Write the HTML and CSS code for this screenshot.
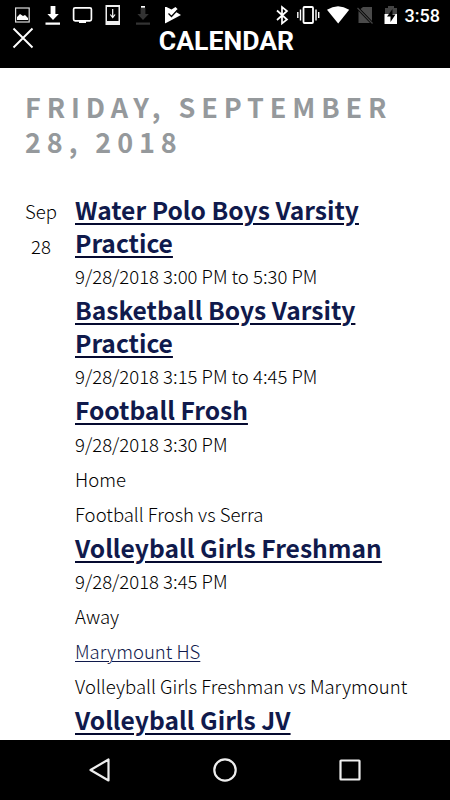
FILE: index.html
```html
<!doctype html>
<html lang="en">
<head>
    <meta charset="UTF-8">
    <title>Calendar</title>
    <link rel="stylesheet" href="styles.css">
</head>
<body>
<div class="header">
    <div class="status-bar">
        <svg class="status-icons" width="450" height="30" viewBox="0 0 450 30">
            <!-- picture -->
            <rect x="15.6" y="8" width="13.6" height="14" fill="none" stroke="#ddd" stroke-width="1.2"/>
            <path d="M17 20v-3l3-3 3 2 2-1 3 3v2z" fill="#fff"/>
            <!-- download -->
            <path d="M50.6 6h4.8v8h3.4L53 20l-5.6-6h3.2zM45.5 22.5h14.5v2.2H45.5z" fill="#fff"/>
            <!-- screen -->
            <rect x="73.6" y="7.8" width="17.8" height="13" rx="1.5" fill="none" stroke="#fff" stroke-width="1.7"/>
            <path d="M79 21h7v2h-7z" fill="#fff"/>
            <!-- phone download -->
            <path d="M105.5 5H120v20h-14.5zM107 7v14h11.5V7z" fill="#eee" fill-rule="evenodd"/>
            <path d="M112.7 9v8M110.3 14.5l2.4 3 2.4-3" fill="none" stroke="#fff" stroke-width="1.2"/>
            <!-- download, inactive -->
            <path d="M140.6 8h4.8v6h3.4L143 20l-5.6-6h3.2zM136 22.5h14v2.2h-14z" fill="#333"/>
            <path d="M141 6h4v1.7h-4z" fill="#fff"/>
            <!-- play check -->
            <path d="M166.5 7l5 2.5 4-2.5 2 2-1.5 3 5 3-15.500 8.300H165V7z" fill="#fff"/>
            <path d="M168.5 13.5l3 3 6-6.5" fill="none" stroke="#000" stroke-width="1.3"/>
            <!-- bluetooth -->
            <path d="M277 10.5l10 9-5 4V7l5 4-10 9" fill="none" stroke="#fff" stroke-width="1.7"/>
            <!-- vibrate -->
            <rect x="303.5" y="7" width="9.5" height="16" rx="1" fill="none" stroke="#fff" stroke-width="1.8"/>
            <path d="M300.5 9.5v11M297.8 12v6M316 9.5v11M318.7 12v6" stroke="#fff" stroke-width="1.4"/>
            <!-- wifi -->
            <path d="M327 9.8Q338 2.5 349.2 9.8L338.2 23.5z" fill="#fff"/>
            <!-- no sim -->
            <path d="M363 7h9v14l-11.5-12zM358.5 11l11.500 12h-11.500z" fill="#4a4a4a"/>
            <path d="M357.5 8l15 15.5" stroke="#444" stroke-width="1.2"/>
            <!-- battery -->
            <path d="M388 6h6v2h3v7h-12V8h3z" fill="#444"/>
            <path d="M384.5 14h12.5v10h-12.5z" fill="#fff"/>
            <path d="M392.5 9l-5.5 7.5h3.5V22l5-7.5h-3z" fill="#000"/>
        </svg>
        <span class="time">3:58</span>
    </div>
    <div class="title-bar">
        <svg class="close" width="22" height="22" viewBox="0 0 22 22">
            <path d="M1.5 1.5l19 19M20.5 1.5l-19 19" stroke="#fff" stroke-width="1.9"/>
        </svg>
        <h1>CALENDAR</h1>
    </div>
</div>

<div class="content">
    <h2>Friday, September 28, 2018</h2>
    <div class="day">
        <div class="date">
            <p>Sep</p>
            <p>28</p>
        </div>
        <ul class="events">
            <li>
                <h3><a href="#">Water Polo Boys Varsity Practice</a></h3>
                <p>9/28/2018 3:00 PM to 5:30 PM</p>
            </li>
            <li>
                <h3><a href="#">Basketball Boys Varsity Practice</a></h3>
                <p>9/28/2018 3:15 PM to 4:45 PM</p>
            </li>
            <li>
                <h3><a href="#">Football Frosh</a></h3>
                <p>9/28/2018 3:30 PM</p>
                <p>Home</p>
                <p>Football Frosh vs Serra</p>
            </li>
            <li>
                <h3><a href="#">Volleyball Girls Freshman</a></h3>
                <p>9/28/2018 3:45 PM</p>
                <p>Away</p>
                <p><a href="#">Marymount HS</a></p>
                <p>Volleyball Girls Freshman vs Marymount</p>
            </li>
            <li>
                <h3><a href="#">Volleyball Girls JV</a></h3>
            </li>
        </ul>
    </div>
</div>

<div class="nav-bar">
    <svg width="24" height="24" viewBox="0 0 24 24">
        <path d="M20.5 1.5v21L2.5 12z"/>
    </svg>
    <svg width="24" height="24" viewBox="0 0 24 24">
        <circle cx="12" cy="12" r="10.7"/>
    </svg>
    <svg width="24" height="24" viewBox="0 0 24 24">
        <rect x="2.5" y="2.5" width="19" height="19" rx="0.5"/>
    </svg>
</div>
</body>
</html>
```

FILE: styles.css
```css
* {
    margin: 0;
    padding: 0;
    box-sizing: border-box;
}

body {
    display: flex;
    flex-direction: column;
    height: 800px;
    overflow: hidden;
    background: #fff;
    color: #000;
    font-family: "Noto Sans CJK SC", "Noto Sans", sans-serif;
}

li {
    list-style: none;
}

.header {
    flex: none;
    height: 68px;
    background: #000;
    color: #fff;
    font-family: Roboto, sans-serif;
}

.status-bar {
    display: grid;
    height: 30px;
}

.status-icons,
.time {
    grid-area: 1 / 1;
}

.time {
    justify-self: end;
    padding-right: 10px;
    font-size: 18px;
    font-weight: 500;
    line-height: 32px;
}

.title-bar {
    display: grid;
    grid-template-columns: 56px 1fr 53px;
    height: 38px;
}

.close {
    margin: -3px 0 0 12px;
}

.title-bar h1 {
    font-size: 26.6px;
    font-weight: 700;
    line-height: 22px;
    text-align: center;
}

.content {
    flex: 1;
    min-height: 0;
    overflow: hidden;
    padding: 21px 25px 0;
}

.content h2 {
    height: 104px;
    color: #95999c;
    font-size: 27px;
    font-weight: 700;
    letter-spacing: 5.9px;
    line-height: 35px;
    text-transform: uppercase;
}

.day {
    display: flex;
    gap: 18px;
    font-size: 18.55px;
    font-weight: 300;
    line-height: 35px;
}

.date {
    width: 32px;
    text-align: center;
}

.events {
    flex: 1;
}

.events h3 {
    font-size: 24.6px;
    font-weight: 700;
    line-height: 32.5px;
}

.events a {
    color: #101a4c;
    text-decoration: underline;
    text-decoration-thickness: 1px;
    text-underline-offset: 2px;
}

.events h3 a {
    text-decoration-color: #050a30;
    text-decoration-thickness: 2px;
    text-underline-offset: 3px;
}

.nav-bar {
    display: flex;
    flex: none;
    align-items: center;
    justify-content: space-between;
    height: 60px;
    padding: 0 88px;
    background: #000;
}

.nav-bar svg {
    fill: none;
    stroke: #eee;
    stroke-width: 2.2;
    stroke-linejoin: round;
}
```
